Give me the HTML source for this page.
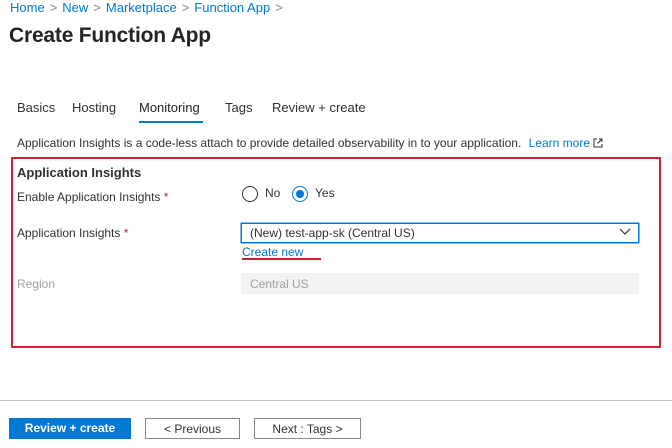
<!DOCTYPE html>
<html><head><meta charset="utf-8"><style>
*{margin:0;padding:0;box-sizing:border-box}
body{width:672px;height:448px;background:#fff;font-family:"Liberation Sans",sans-serif;color:#323130;position:relative;overflow:hidden;font-size:12px}
.a{position:absolute;white-space:nowrap}
.bc{color:#0078d4;font-size:13px}
.bc span{color:#8a8886;margin:0 5px}
.tab{font-size:13px;top:100px}
.lbl{font-size:12px;left:17px}
.star{color:#a4262c}
.radio{position:absolute;width:16px;height:16px;border-radius:50%;border:1px solid #323130;top:186px}
.btn{position:absolute;top:418px;height:21px;font-size:12px;text-align:center;line-height:20px}
</style></head><body>
<div class="a bc" style="left:10px;top:0px">Home<span>&gt;</span>New<span>&gt;</span>Marketplace<span>&gt;</span>Function App<span>&gt;</span></div>
<div class="a" style="left:9px;top:24px;font-size:21px;font-weight:bold;color:#252423;letter-spacing:-0.2px">Create Function App</div>
<div class="a tab" style="left:17px">Basics</div>
<div class="a tab" style="left:72px">Hosting</div>
<div class="a tab" style="left:139px;color:#201f1e">Monitoring</div>
<div class="a" style="left:139px;top:121px;width:64px;height:2px;background:#0078d4"></div>
<div class="a tab" style="left:225px">Tags</div>
<div class="a tab" style="left:272px">Review + create</div>
<div class="a" style="left:17px;top:136px;font-size:12px">Application Insights is a code-less attach to provide detailed observability in to your application. <span style="color:#0078d4;margin-left:4px">Learn more</span> <svg width="10" height="10" viewBox="0 0 10 10" style="vertical-align:-1px"><path d="M4 1H1v8h8V6M6 1h3v3M9 1L4.5 5.5" fill="none" stroke="#323130"/></svg></div>
<div class="a" style="left:11px;top:157px;width:650px;height:191px;border:2px solid #d0243a"></div>
<div class="a" style="left:17px;top:165px;font-size:13px;font-weight:bold;color:#323130">Application Insights</div>
<div class="a lbl" style="top:190px">Enable Application Insights <span class="star">*</span></div>
<div class="a lbl" style="top:226px">Application Insights <span class="star">*</span></div>
<div class="a lbl" style="top:277px;color:#a19f9d">Region</div>
<div class="radio" style="left:242px"></div>
<div class="a" style="left:265px;top:186px;font-size:12px">No</div>
<div class="radio" style="left:292px;border-color:#0078d4"><div style="position:absolute;left:3px;top:3px;width:8px;height:8px;border-radius:50%;background:#0078d4"></div></div>
<div class="a" style="left:315px;top:186px;font-size:12px">Yes</div>
<div class="a" style="left:241px;top:223px;width:398px;height:20px;border:1px solid #0078d4;box-shadow:0 0 0 0.5px #0078d4"></div>
<div class="a" style="left:250px;top:226px;font-size:12px">(New) test-app-sk (Central US)</div>
<svg class="a" style="left:619px;top:228px" width="12" height="8" viewBox="0 0 12 8"><path d="M1 1l5 5 5-5" fill="none" stroke="#323130" stroke-width="1.2"/></svg>
<div class="a" style="left:242px;top:245px;font-size:12px;color:#0078d4">Create new</div>
<div class="a" style="left:242px;top:258px;width:79px;height:2px;background:#c4262e"></div>
<div class="a" style="left:241px;top:273px;width:398px;height:21px;background:#f3f2f1"></div>
<div class="a" style="left:250px;top:277px;font-size:12px;color:#a19f9d">Central US</div>
<div class="a" style="left:0;top:400px;width:672px;height:1px;background:#c8c6c4"></div>
<div class="btn" style="left:9px;width:122px;background:#0078d4;color:#fff;font-weight:bold">Review + create</div>
<div class="btn" style="left:145px;width:95px;border:1px solid #8a8886">&lt; Previous</div>
<div class="btn" style="left:254px;width:107px;border:1px solid #8a8886">Next : Tags &gt;</div>
</body></html>
